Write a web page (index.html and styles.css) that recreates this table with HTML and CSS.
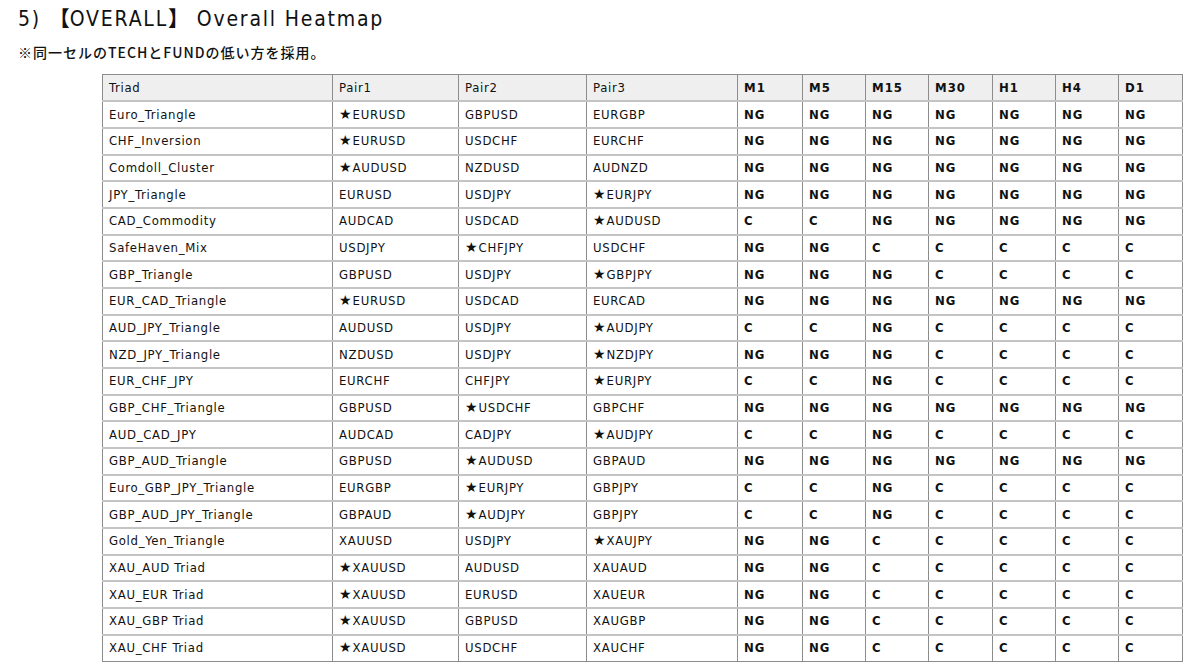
FILE: index.html
```html
<!DOCTYPE html>
<html lang="ja">
<head>
<meta charset="utf-8">
<title>Overall Heatmap</title>
<link rel="stylesheet" href="styles.css">
</head>
<body>
<h2 class="title">5) <span class="br">【</span>OVERALL<span class="br">】</span> Overall Heatmap</h2>
<p class="note">※同一セルのTECHとFUNDの低い方を採用。</p>
<table class="heat">
<colgroup>
<col class="c-triad"><col class="c-p1"><col class="c-p2"><col class="c-p3">
<col class="c-m1"><col class="c-tf"><col class="c-tf"><col class="c-tf2"><col class="c-tf"><col class="c-tf"><col class="c-tf2">
</colgroup>
<thead>
<tr><th>Triad</th><th>Pair1</th><th>Pair2</th><th>Pair3</th><th class="tf">M1</th><th class="tf">M5</th><th class="tf">M15</th><th class="tf">M30</th><th class="tf">H1</th><th class="tf">H4</th><th class="tf">D1</th></tr>
</thead>
<tbody>
<tr><td>Euro_Triangle</td><td><span class="star">★</span>EURUSD</td><td>GBPUSD</td><td>EURGBP</td><td class="tf">NG</td><td class="tf">NG</td><td class="tf">NG</td><td class="tf">NG</td><td class="tf">NG</td><td class="tf">NG</td><td class="tf">NG</td></tr>
<tr><td>CHF_Inversion</td><td><span class="star">★</span>EURUSD</td><td>USDCHF</td><td>EURCHF</td><td class="tf">NG</td><td class="tf">NG</td><td class="tf">NG</td><td class="tf">NG</td><td class="tf">NG</td><td class="tf">NG</td><td class="tf">NG</td></tr>
<tr><td>Comdoll_Cluster</td><td><span class="star">★</span>AUDUSD</td><td>NZDUSD</td><td>AUDNZD</td><td class="tf">NG</td><td class="tf">NG</td><td class="tf">NG</td><td class="tf">NG</td><td class="tf">NG</td><td class="tf">NG</td><td class="tf">NG</td></tr>
<tr><td>JPY_Triangle</td><td>EURUSD</td><td>USDJPY</td><td><span class="star">★</span>EURJPY</td><td class="tf">NG</td><td class="tf">NG</td><td class="tf">NG</td><td class="tf">NG</td><td class="tf">NG</td><td class="tf">NG</td><td class="tf">NG</td></tr>
<tr><td>CAD_Commodity</td><td>AUDCAD</td><td>USDCAD</td><td><span class="star">★</span>AUDUSD</td><td class="tf">C</td><td class="tf">C</td><td class="tf">NG</td><td class="tf">NG</td><td class="tf">NG</td><td class="tf">NG</td><td class="tf">NG</td></tr>
<tr><td>SafeHaven_Mix</td><td>USDJPY</td><td><span class="star">★</span>CHFJPY</td><td>USDCHF</td><td class="tf">NG</td><td class="tf">NG</td><td class="tf">C</td><td class="tf">C</td><td class="tf">C</td><td class="tf">C</td><td class="tf">C</td></tr>
<tr><td>GBP_Triangle</td><td>GBPUSD</td><td>USDJPY</td><td><span class="star">★</span>GBPJPY</td><td class="tf">NG</td><td class="tf">NG</td><td class="tf">NG</td><td class="tf">C</td><td class="tf">C</td><td class="tf">C</td><td class="tf">C</td></tr>
<tr><td>EUR_CAD_Triangle</td><td><span class="star">★</span>EURUSD</td><td>USDCAD</td><td>EURCAD</td><td class="tf">NG</td><td class="tf">NG</td><td class="tf">NG</td><td class="tf">NG</td><td class="tf">NG</td><td class="tf">NG</td><td class="tf">NG</td></tr>
<tr><td>AUD_JPY_Triangle</td><td>AUDUSD</td><td>USDJPY</td><td><span class="star">★</span>AUDJPY</td><td class="tf">C</td><td class="tf">C</td><td class="tf">NG</td><td class="tf">C</td><td class="tf">C</td><td class="tf">C</td><td class="tf">C</td></tr>
<tr><td>NZD_JPY_Triangle</td><td>NZDUSD</td><td>USDJPY</td><td><span class="star">★</span>NZDJPY</td><td class="tf">NG</td><td class="tf">NG</td><td class="tf">NG</td><td class="tf">C</td><td class="tf">C</td><td class="tf">C</td><td class="tf">C</td></tr>
<tr><td>EUR_CHF_JPY</td><td>EURCHF</td><td>CHFJPY</td><td><span class="star">★</span>EURJPY</td><td class="tf">C</td><td class="tf">C</td><td class="tf">NG</td><td class="tf">C</td><td class="tf">C</td><td class="tf">C</td><td class="tf">C</td></tr>
<tr><td>GBP_CHF_Triangle</td><td>GBPUSD</td><td><span class="star">★</span>USDCHF</td><td>GBPCHF</td><td class="tf">NG</td><td class="tf">NG</td><td class="tf">NG</td><td class="tf">NG</td><td class="tf">NG</td><td class="tf">NG</td><td class="tf">NG</td></tr>
<tr><td>AUD_CAD_JPY</td><td>AUDCAD</td><td>CADJPY</td><td><span class="star">★</span>AUDJPY</td><td class="tf">C</td><td class="tf">C</td><td class="tf">NG</td><td class="tf">C</td><td class="tf">C</td><td class="tf">C</td><td class="tf">C</td></tr>
<tr><td>GBP_AUD_Triangle</td><td>GBPUSD</td><td><span class="star">★</span>AUDUSD</td><td>GBPAUD</td><td class="tf">NG</td><td class="tf">NG</td><td class="tf">NG</td><td class="tf">NG</td><td class="tf">NG</td><td class="tf">NG</td><td class="tf">NG</td></tr>
<tr><td>Euro_GBP_JPY_Triangle</td><td>EURGBP</td><td><span class="star">★</span>EURJPY</td><td>GBPJPY</td><td class="tf">C</td><td class="tf">C</td><td class="tf">NG</td><td class="tf">C</td><td class="tf">C</td><td class="tf">C</td><td class="tf">C</td></tr>
<tr><td>GBP_AUD_JPY_Triangle</td><td>GBPAUD</td><td><span class="star">★</span>AUDJPY</td><td>GBPJPY</td><td class="tf">C</td><td class="tf">C</td><td class="tf">NG</td><td class="tf">C</td><td class="tf">C</td><td class="tf">C</td><td class="tf">C</td></tr>
<tr><td>Gold_Yen_Triangle</td><td>XAUUSD</td><td>USDJPY</td><td><span class="star">★</span>XAUJPY</td><td class="tf">NG</td><td class="tf">NG</td><td class="tf">C</td><td class="tf">C</td><td class="tf">C</td><td class="tf">C</td><td class="tf">C</td></tr>
<tr><td>XAU_AUD Triad</td><td><span class="star">★</span>XAUUSD</td><td>AUDUSD</td><td>XAUAUD</td><td class="tf">NG</td><td class="tf">NG</td><td class="tf">C</td><td class="tf">C</td><td class="tf">C</td><td class="tf">C</td><td class="tf">C</td></tr>
<tr><td>XAU_EUR Triad</td><td><span class="star">★</span>XAUUSD</td><td>EURUSD</td><td>XAUEUR</td><td class="tf">NG</td><td class="tf">NG</td><td class="tf">C</td><td class="tf">C</td><td class="tf">C</td><td class="tf">C</td><td class="tf">C</td></tr>
<tr><td>XAU_GBP Triad</td><td><span class="star">★</span>XAUUSD</td><td>GBPUSD</td><td>XAUGBP</td><td class="tf">NG</td><td class="tf">NG</td><td class="tf">C</td><td class="tf">C</td><td class="tf">C</td><td class="tf">C</td><td class="tf">C</td></tr>
<tr><td>XAU_CHF Triad</td><td><span class="star">★</span>XAUUSD</td><td>USDCHF</td><td>XAUCHF</td><td class="tf">NG</td><td class="tf">NG</td><td class="tf">C</td><td class="tf">C</td><td class="tf">C</td><td class="tf">C</td><td class="tf">C</td></tr>
</tbody>
</table>
</body>
</html>
```

FILE: styles.css
```css
html, body {
  margin: 0;
  padding: 0;
  background: #ffffff;
}

body {
  padding: 4px 0 0 18px;
  color: #111111;
  font-family: "DejaVu Sans Condensed", "Liberation Sans Narrow", "Liberation Sans", "Noto Sans CJK JP", sans-serif;
}

.title {
  margin: 0;
  height: 26px;
  line-height: 26px;
  font-size: 21px;
  font-weight: normal;
  letter-spacing: 1.8px;
  color: #111111;
}

.title .br {
  font-family: "Noto Sans CJK JP", sans-serif;
  font-weight: bold;
  letter-spacing: 0;
}

.note {
  margin: 13px 0 0 0;
  height: 18px;
  line-height: 18px;
  font-family: "Noto Sans CJK JP", sans-serif;
  font-size: 14px;
  font-weight: 500;
  letter-spacing: 1px;
  color: #111111;
}

.heat {
  margin: 13px 0 0 84px;
  width: 1080px;
  table-layout: fixed;
  border-collapse: collapse;
  border: 1px solid #8c8c8c;
  font-size: 13px;
  letter-spacing: 0.7px;
  color: #111111;
}

.c-triad { width: 230px; }
.c-p1 { width: 126px; }
.c-p2 { width: 128px; }
.c-p3 { width: 151px; }
.c-m1 { width: 65px; }
.c-tf { width: 63px; }
.c-tf2 { width: 64px; }

.heat tr {
  height: 26.68px;
}

.heat th,
.heat td {
  padding: 0 6px;
  line-height: 16px;
  text-align: left;
  white-space: nowrap;
  overflow: hidden;
  border-left: 1px solid #8c8c8c;
  border-right: 1px solid #8c8c8c;
  border-top: 2px solid #c4c4c4;
  border-bottom: 2px solid #c4c4c4;
  vertical-align: middle;
}

.heat th {
  background: #efefef;
  font-weight: normal;
  border-top: 1px solid #8c8c8c;
}

.heat tbody tr:last-child td {
  border-bottom: 1px solid #8c8c8c;
}

.heat .tf {
  font-weight: bold;
  letter-spacing: 1px;
}

.star {
  font-family: "DejaVu Sans", "Noto Sans CJK JP", sans-serif;
  font-size: 14px;
  line-height: 1;
  letter-spacing: 0;
  margin-right: 1px;
}
```
